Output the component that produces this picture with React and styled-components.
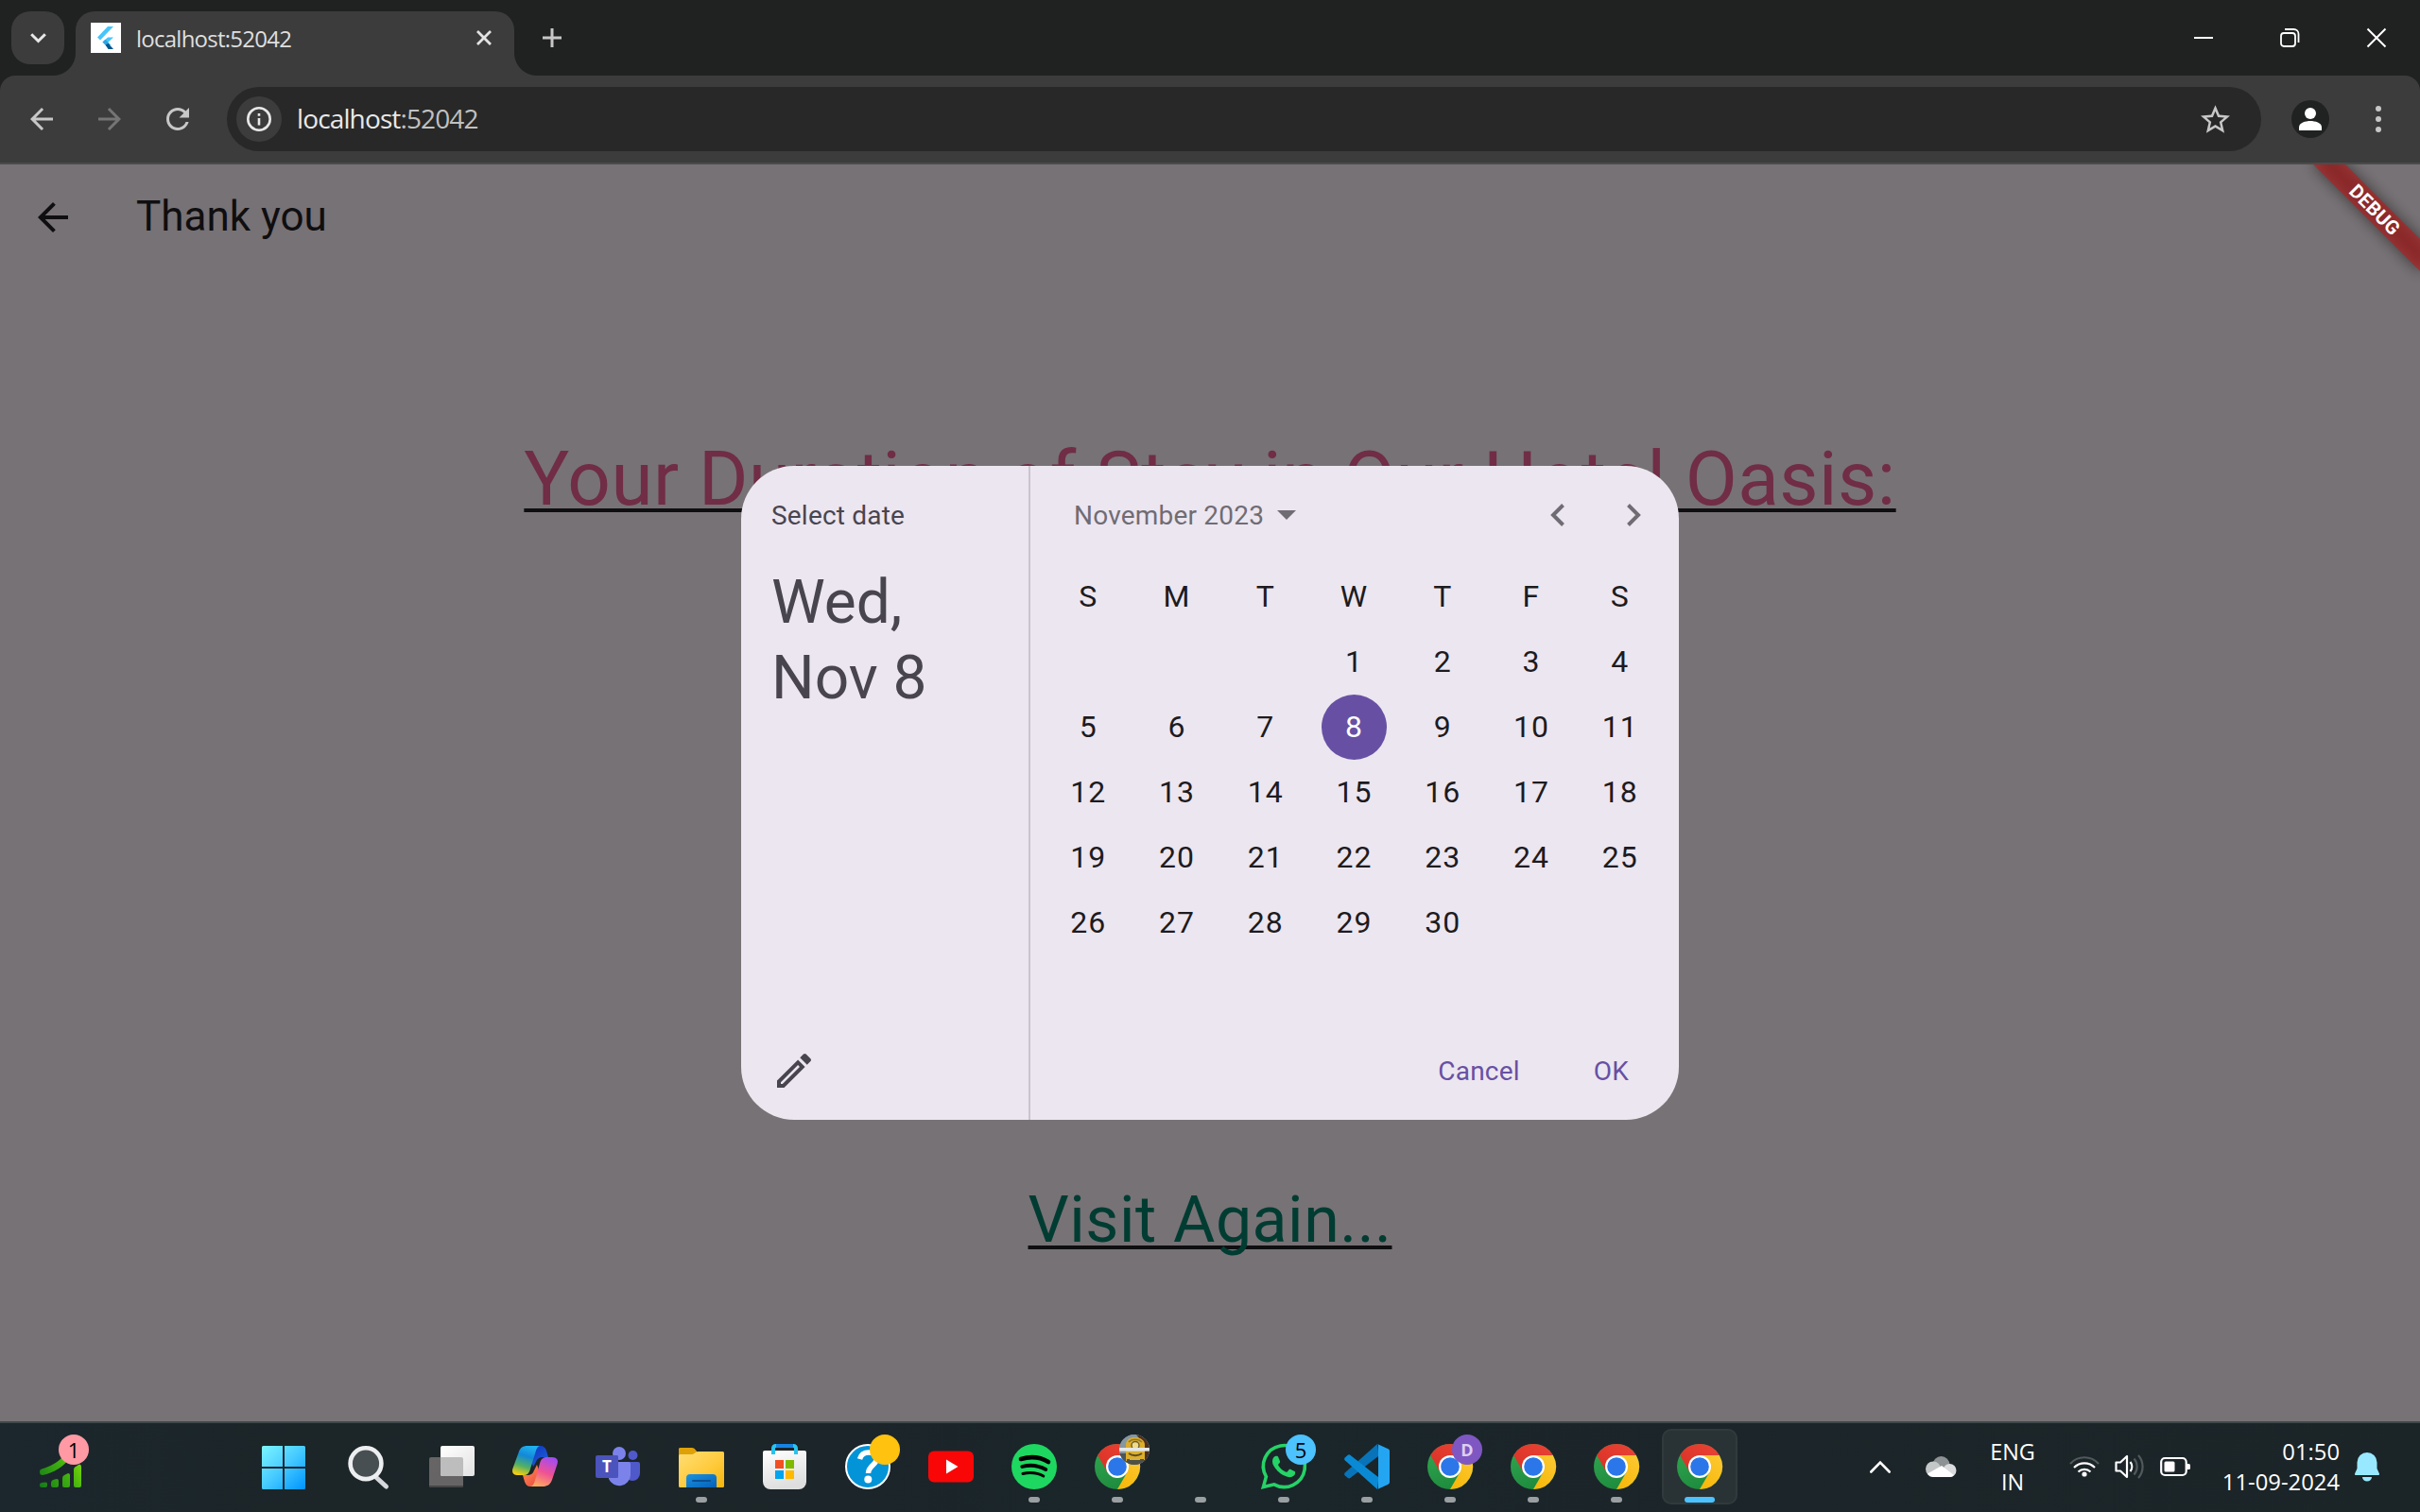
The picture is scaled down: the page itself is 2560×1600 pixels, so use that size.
import React from "react";
import styled, { createGlobalStyle, css } from "styled-components";

const ui = `"Open Sans", "Noto Sans", sans-serif`;
const roboto = `Roboto, "Noto Sans", sans-serif`;

const GlobalStyle = createGlobalStyle`
  *, *::before, *::after { box-sizing: border-box; }
  body { margin: 0; background: #202221; overflow: hidden; }
  svg { display: block; flex: none; overflow: visible; }
`;

const Screen = styled.div`
  width: 2560px;
  height: 1600px;
  display: flex;
  flex-direction: column;
  overflow: hidden;
`;

/* ---------- browser chrome ---------- */

const TabStrip = styled.header`
  height: 80px;
  display: flex;
  background: #202221;
  padding-left: 12px;
`;

const TabSearch = styled.div`
  width: 56px;
  height: 56px;
  margin: 12px 12px 0 0;
  border-radius: 20px;
  background: #3c3c3c;
  display: grid;
  place-items: center;
`;

const Tab = styled.div`
  position: relative;
  width: 464px;
  height: 68px;
  margin-top: 12px;
  padding: 0 24px 12px 16px;
  border-radius: 20px 20px 0 0;
  background: #3c3c3c;
  display: flex;
  align-items: center;

  &::before,
  &::after {
    content: "";
    position: absolute;
    bottom: 0;
    width: 24px;
    height: 24px;
  }
  &::before {
    right: 100%;
    background: radial-gradient(circle at 0 0, transparent 23.5px, #3c3c3c 24.5px);
  }
  &::after {
    left: 100%;
    background: radial-gradient(circle at 100% 0, transparent 23.5px, #3c3c3c 24.5px);
  }
`;

const TabTitle = styled.span`
  flex: 1;
  margin-left: 16px;
  padding-top: 2px;
  font: 400 24px/34px ${ui};
  letter-spacing: -0.75px;
  color: #dfdfdf;
`;

const NewTab = styled.div`
  width: 80px;
  height: 80px;
  display: grid;
  place-items: center;
`;

const WindowControls = styled.div`
  margin-left: auto;
  display: flex;
  align-items: center;
  gap: 71px;
  padding-right: 36px;
`;

const ToolbarBack = styled.div`
  background: #202221;
`;

const Toolbar = styled.div`
  height: 94px;
  background: #3c3c3c;
  border-bottom: 2px solid #4a4b4b;
  border-radius: 16px 16px 0 0;
  display: flex;
  align-items: center;
  padding: 0 40px 0 32px;
`;

const NavButtons = styled.nav`
  display: flex;
  gap: 48px;
  width: 208px;
`;

const Omnibox = styled.div`
  width: 2152px;
  height: 68px;
  border-radius: 34px;
  background: #282828;
  display: flex;
  align-items: center;
  padding: 0 33px 0 10px;
`;

const SiteInfo = styled.div`
  width: 48px;
  height: 48px;
  border-radius: 50%;
  background: #3c3c3c;
  display: grid;
  place-items: center;
`;

const Url = styled.span`
  flex: 1;
  margin-left: 16px;
  padding-bottom: 2px;
  font: 400 28px/40px ${ui};
  letter-spacing: -0.87px;
  color: #e8e8e8;
`;

const Port = styled.span`
  color: #c0c1c1;
`;

const Profile = styled.div`
  width: 40px;
  height: 40px;
  margin-left: 32px;
  border-radius: 50%;
  background: #202221;
  display: grid;
  place-items: center;
`;

const Menu = styled.div`
  margin-left: auto;
`;

/* ---------- page ---------- */

const Page = styled.main`
  position: relative;
  height: 1330px;
  background: #777275;
  overflow: hidden;
  font-family: ${roboto};
`;

const AppBar = styled.div`
  height: 112px;
  display: flex;
  align-items: center;
  padding-left: 32px;
`;

const AppTitle = styled.h1`
  margin: 0 0 2px 64px;
  font-size: 44px;
  line-height: 56px;
  font-weight: 400;
  color: #0f0e10;
`;

const Body = styled.div`
  display: flex;
  flex-direction: column;
  align-items: center;
`;

const Underlined = styled.p`
  margin: ${(p) => p.$top}px 0 0;
  font-size: ${(p) => p.$size}px;
  line-height: ${(p) => p.$line}px;
  letter-spacing: 0.5px;
  white-space: nowrap;
  color: ${(p) => p.$color};
  text-decoration: underline;
  text-decoration-color: #0f0e10;
  text-decoration-thickness: ${(p) => p.$thick}px;
  text-underline-offset: ${(p) => p.$offset}px;
  text-decoration-skip-ink: none;
`;

const DebugBanner = styled.div`
  position: absolute;
  left: 2432px;
  top: 36px;
  width: 160px;
  height: 24px;
  transform: rotate(45deg);

  &::before {
    content: "";
    position: absolute;
    inset: 0;
    background: rgba(0, 0, 0, 0.5);
    filter: blur(8px);
  }
`;

const DebugLabel = styled.span`
  position: absolute;
  inset: 0;
  background: rgba(183, 28, 28, 0.627);
  color: #fff;
  font-size: 20.4px;
  font-weight: 700;
  letter-spacing: 0.2px;
  line-height: 24px;
  text-align: center;
`;

/* ---------- date picker ---------- */

const Dialog = styled.section`
  position: absolute;
  left: 784px;
  top: 319px;
  width: 992px;
  height: 692px;
  border-radius: 56px;
  background: #ece6f0;
  overflow: hidden;
  display: flex;
`;

const Side = styled.div`
  width: 304px;
  padding: 33px 32px 28px;
  display: flex;
  flex-direction: column;
  color: #49454f;
`;

const SideLabel = styled.div`
  font-size: 28px;
  line-height: 40px;
  letter-spacing: 0.2px;
`;

const SideDate = styled.div`
  margin-top: 32px;
  font-size: 64px;
  line-height: 80px;
  white-space: pre-line;
`;

const EditButton = styled.div`
  margin-top: auto;
`;

const Main = styled.div`
  flex: 1;
  box-shadow: inset 2px 0 0 #cac4d0;
  display: flex;
  flex-direction: column;
  padding: 0 16px;
`;

const MonthBar = styled.div`
  height: 104px;
  display: flex;
  align-items: center;
  padding: 0 24px 0 32px;
  color: #706c74;
  font-size: 28px;
  letter-spacing: 0.2px;
`;

const Caret = styled.span`
  margin-left: 14px;
  border: 10px solid transparent;
  border-top-color: #706c74;
  border-bottom: 0;
`;

const MonthNav = styled.div`
  margin-left: auto;
  display: flex;
  gap: 66px;
`;

const Grid = styled.div`
  display: grid;
  grid-template-columns: repeat(7, 1fr);
  grid-auto-rows: 69px;
  place-items: center;
  margin: 0 -0.5px 0 0.5px;
  color: #1d1b20;
  font-size: 32px;
  letter-spacing: 1px;
`;

const Day = styled.span`
  width: 69px;
  height: 69px;
  border-radius: 50%;
  line-height: 69px;
  text-align: center;
  ${(p) =>
    p.$selected &&
    css`
      background: #6750a4;
      color: #fff;
    `}
`;

const Actions = styled.div`
  margin-top: auto;
  height: 104px;
  display: flex;
  align-items: center;
  justify-content: flex-end;
  gap: 78px;
  padding-right: 37px;
  color: #6750a4;
  font-size: 28px;
  letter-spacing: 0.2px;
`;

/* ---------- taskbar ---------- */

const Taskbar = styled.footer`
  height: 96px;
  border-top: 2px solid #3f484b;
  background: linear-gradient(90deg, #1b272d 0, #1c2528 340px, #1c2529 900px, #1a262a 1200px, #1c2529 1900px, #1b2427 100%);
  display: flex;
  align-items: center;
  padding-bottom: 2px;
  font-family: ${ui};
`;

const Widgets = styled.div`
  width: 262px;
  padding-left: 42px;
`;

const IconWrap = styled.div`
  position: relative;
  width: 48px;
  height: 48px;
`;

const Badge = styled.span`
  position: absolute;
  left: ${(p) => p.$left || 26}px;
  top: -10px;
  width: 32px;
  height: 32px;
  border-radius: 50%;
  background: ${(p) => p.$bg};
  color: ${(p) => p.$fg || "#000"};
  font-size: ${(p) => p.$size || 22}px;
  font-weight: ${(p) => p.$weight || 400};
  line-height: 32px;
  text-align: center;
  overflow: hidden;
`;

const Apps = styled.div`
  display: flex;
  gap: 8px;
`;

const AppSlot = styled.div`
  width: 80px;
  height: 80px;
  border-radius: 10px;
  padding-top: 16px;
  display: flex;
  flex-direction: column;
  align-items: center;
  ${(p) =>
    p.$state === "active" &&
    css`
      background: #293235;
      box-shadow: inset 0 0 0 2px #30393c;
    `}

  &::after {
    content: "";
    display: ${(p) => (p.$state ? "block" : "none")};
    margin-top: 8px;
    width: ${(p) => (p.$state === "active" ? 32 : 12)}px;
    height: 6px;
    border-radius: 3px;
    background: ${(p) => (p.$state === "active" ? "#4cc2ff" : "#9a9fa2")};
  }
`;

const Tray = styled.div`
  margin-left: auto;
  padding-right: 43px;
  display: flex;
  align-items: center;
  color: #fff;
  font-size: 23.4px;
  line-height: 32px;
`;

const Language = styled.div`
  width: 84px;
  margin: 0 18px 0 17px;
  text-align: center;
`;

const StatusIcons = styled.div`
  display: flex;
  gap: 16px;
`;

const Clock = styled.div`
  width: 157px;
  margin-right: 16px;
  font-size: 23.8px;
  text-align: right;
`;

/* ---------- drawings ---------- */

const Chrome = () => (
  <svg width="48" height="48" viewBox="0 0 48 48">
    <defs>
      <linearGradient id="cg" x1="0" y1="0" x2="0.4" y2="1">
        <stop offset="0" stopColor="#33a852" />
        <stop offset="1" stopColor="#1e8c3e" />
      </linearGradient>
      <linearGradient id="cy" x1="1" y1="0" x2="0.4" y2="1">
        <stop offset="0" stopColor="#fcc934" />
        <stop offset="1" stopColor="#f8b90c" />
      </linearGradient>
      <linearGradient id="cr" x1="0" y1="1" x2="1" y2="0">
        <stop offset="0" stopColor="#d93025" />
        <stop offset="1" stopColor="#ea4335" />
      </linearGradient>
    </defs>
    <circle cx="24" cy="24" r="24" fill="url(#cg)" />
    <path d="M44.8 12A24 24 0 0 1 24 48L34.4 30 24 12Z" fill="url(#cy)" />
    <path d="M3.2 12A24 24 0 0 1 44.8 12H24L13.6 30Z" fill="url(#cr)" />
    <circle cx="24" cy="24" r="12" fill="#fff" />
    <circle cx="24" cy="24" r="9.8" fill="#2b77ea" />
  </svg>
);

const StartLogo = () => (
  <svg width="48" height="48" viewBox="2 0 48 48">
    <defs>
      <linearGradient id="win" gradientUnits="userSpaceOnUse" x1="0" y1="2" x2="45" y2="48">
        <stop offset="0" stopColor="#7df6ff" />
        <stop offset="0.5" stopColor="#48ccff" />
        <stop offset="1" stopColor="#0296ff" />
      </linearGradient>
    </defs>
    <path
      fill="url(#win)"
      d="M2.500 2H23V24H1V3.500A1.500 1.500 0 0 1 2.500 2ZM25 2H45.500A1.500 1.500 0 0 1 47 3.500V24H25ZM1 26H23V48H2.500A1.500 1.500 0 0 1 1 46.500ZM25 26H47V46.500A1.500 1.500 0 0 1 45.500 48H25Z"
    />
  </svg>
);

const SearchLogo = () => (
  <svg width="48" height="48" viewBox="0 0 48 48">
    <path d="M31 34.500 42.500 45" stroke="#d5d8dc" strokeWidth="5" strokeLinecap="round" />
    <circle cx="21" cy="20.700" r="16.400" fill="#474f52" stroke="#eceef0" strokeWidth="4.600" />
  </svg>
);

const TaskView = () => (
  <svg width="48" height="48" viewBox="0 0 48 48">
    <defs>
      <linearGradient id="tv" x1="0" y1="0" x2="1" y2="1">
        <stop offset="0" stopColor="#fff" />
        <stop offset="1" stopColor="#e2e2e2" />
      </linearGradient>
    </defs>
    <rect x="0" y="14" width="36" height="32" rx="2" fill="#666464" />
    <path d="M0 44H36A2 2 0 0 1 34 46H2A2 2 0 0 1 0 44Z" fill="#464646" />
    <rect x="12" y="2" width="36" height="32" rx="2" fill="url(#tv)" />
    <path d="M12 14H34A2 2 0 0 1 36 16V34H14A2 2 0 0 1 12 32Z" fill="#bdbdbd" />
  </svg>
);

const Copilot = () => (
  <svg width="48" height="48" viewBox="0 0 48 48">
    <defs>
      <linearGradient id="cpa" x1="0.6" y1="0" x2="0.3" y2="1">
        <stop offset="0" stopColor="#1fb2ef" />
        <stop offset="0.35" stopColor="#1388d8" />
        <stop offset="0.7" stopColor="#52b064" />
        <stop offset="1" stopColor="#f5cf10" />
      </linearGradient>
      <linearGradient id="cpb" x1="0.7" y1="0" x2="0.3" y2="1">
        <stop offset="0" stopColor="#a34cf2" />
        <stop offset="0.5" stopColor="#ee5195" />
        <stop offset="1" stopColor="#ffab5e" />
      </linearGradient>
      <linearGradient id="cpc" x1="0" y1="0" x2="1" y2="1">
        <stop offset="0" stopColor="#0a2fb8" />
        <stop offset="1" stopColor="#2263dd" />
      </linearGradient>
      <linearGradient id="cpd" x1="0" y1="0" x2="1" y2="1">
        <stop offset="0" stopColor="#ff9550" />
        <stop offset="1" stopColor="#e83d3f" />
      </linearGradient>
    </defs>
    <path d="M14 2H29C33 2 35 4 36 7L38 14H33C28 14 26 16 25 19L22 24Z" fill="url(#cpc)" />
    <path d="M34 45H19C16 45 14 43 13 40L11 33H15C20 33 22 31 23 28L26 22Z" fill="url(#cpd)" />
    <path d="M16 2H30C27 2 26 4 25 7L18.500 28C17.500 31 15.500 33 12 33H5C1 33-.8 30 .4 26L7 8C8.500 4 11 2 16 2Z" fill="url(#cpa)" />
    <path d="M37 14H42C47 14 48.800 17 47.600 21L42 38C40 43 37 45 32 45H18C21 45 22.500 43 23.500 40L29.500 19C30.500 16 32.500 14 37 14Z" fill="url(#cpb)" />
  </svg>
);

const Teams = () => (
  <svg width="48" height="48" viewBox="0 0 48 48">
    <circle cx="39.500" cy="12" r="5" fill="#5059c9" />
    <path d="M32 19H45A2 2 0 0 1 47 21V31A8 8 0 0 1 39 39C35 39 32 36 32 31Z" fill="#5059c9" />
    <circle cx="25" cy="10" r="7" fill="#7b83eb" />
    <path d="M14 19H35A2 2 0 0 1 37 21V33A12 12 0 0 1 14 37Z" fill="#7b83eb" />
    <path d="M18 12H24V36H16V19Z" fill="#000" opacity=".12" />
    <rect x="0" y="12" width="24" height="24" rx="2" fill="#4b53bc" />
    <text x="12" y="30" fill="#fff" fontFamily="Open Sans, sans-serif" fontSize="17" fontWeight="700" textAnchor="middle">
      T
    </text>
  </svg>
);

const Folder = () => (
  <svg width="48" height="48" viewBox="0 0 48 48">
    <defs>
      <linearGradient id="fo" x1="0" y1="0" x2="1" y2="1">
        <stop offset="0" stopColor="#ffde75" />
        <stop offset="0.55" stopColor="#ffcb3e" />
        <stop offset="1" stopColor="#f6b50c" />
      </linearGradient>
      <linearGradient id="fb" x1="0" y1="0" x2="1" y2="1">
        <stop offset="0" stopColor="#1a93e0" />
        <stop offset="1" stopColor="#0660b8" />
      </linearGradient>
    </defs>
    <path d="M0 5A1.500 1.500 0 0 1 1.500 4H14C17 4 18 7 20 8.500H30V20H0Z" fill="#dfa108" />
    <path d="M0 12.500A1.500 1.500 0 0 1 1.500 11H14C17 11 17 8 21 8H46.500A1.500 1.500 0 0 1 48 9.500V44.500A1.500 1.500 0 0 1 46.500 46H1.500A1.500 1.500 0 0 1 0 44.500Z" fill="url(#fo)" />
    <path d="M8 46V36A4 4 0 0 1 12 32H36A4 4 0 0 1 40 36V46Z" fill="url(#fb)" />
    <path d="M15 39H33" stroke="#0b4f92" strokeWidth="2" strokeLinecap="round" />
  </svg>
);

const Store = () => (
  <svg width="48" height="48" viewBox="0 0 48 48">
    <defs>
      <linearGradient id="st" x1="0" y1="0" x2="0.3" y2="1">
        <stop offset="0" stopColor="#fff" />
        <stop offset="1" stopColor="#dedede" />
      </linearGradient>
    </defs>
    <path d="M1 9A2 2 0 0 1 3 7H45A2 2 0 0 1 47 9V40A8 8 0 0 1 39 48H9A8 8 0 0 1 1 40Z" fill="url(#st)" />
    <path d="M12 11V4.500A2.500 2.500 0 0 1 14.500 2H33.500A2.500 2.500 0 0 1 36 4.500V11" fill="none" stroke="#27c4ee" strokeWidth="4" />
    <path d="M15 2H33" stroke="#1683e4" strokeWidth="4" />
    <rect x="14" y="17" width="9" height="9" fill="#f25022" />
    <rect x="25" y="17" width="9" height="9" fill="#7fba00" />
    <rect x="14" y="28" width="9" height="9" fill="#00a4ef" />
    <rect x="25" y="28" width="9" height="9" fill="#ffb900" />
  </svg>
);

const Help = () => (
  <svg width="48" height="48" viewBox="0 0 48 48">
    <circle cx="24" cy="24" r="23" fill="#0394d8" stroke="#fff" strokeWidth="2" />
    <path d="M15.500 16C17 10.500 21 9 25 9C30 9 33 12 33 16.500C33 22 24.500 23.500 24.500 31" fill="none" stroke="#fff" strokeWidth="5.500" />
    <circle cx="24.300" cy="37.500" r="4" fill="#fff" />
  </svg>
);

const YouTube = () => (
  <svg width="48" height="48" viewBox="0 0 48 48">
    <rect x="0" y="7.500" width="48" height="33" rx="6" fill="#f90707" />
    <path d="M19 16.500 31.500 24 19 31.500Z" fill="#fff" />
  </svg>
);

const Spotify = () => (
  <svg width="48" height="48" viewBox="0 0 48 48">
    <circle cx="24" cy="24" r="24" fill="#1ed760" />
    <g fill="none" stroke="#000" strokeLinecap="round">
      <path d="M10 16C20 13 31 14.200 39 19" strokeWidth="4.600" />
      <path d="M11.300 24C20 21.500 29 23 36.300 27" strokeWidth="3.900" />
      <path d="M12 31.500C20 29.800 27.500 30.600 33.800 34" strokeWidth="3" />
    </g>
  </svg>
);

const WhatsApp = () => (
  <svg width="48" height="48" viewBox="0 0 24 24" fill="#25d366">
    <path d="M17.472 14.382c-.297-.149-1.758-.867-2.030-.967-.273-.099-.471-.148-.67.15-.197.297-.767.966-.94 1.164-.173.199-.347.223-.644.075-.297-.15-1.255-.463-2.390-1.475-.883-.788-1.480-1.761-1.653-2.059-.173-.297-.018-.458.130-.606.134-.133.298-.347.446-.520.149-.174.198-.298.298-.497.099-.198.050-.371-.025-.520-.075-.149-.669-1.612-.916-2.207-.242-.579-.487-.500-.669-.510-.173-.008-.371-.010-.570-.010-.198 0-.520.074-.792.372-.272.297-1.040 1.016-1.040 2.479 0 1.462 1.065 2.875 1.213 3.074.149.198 2.096 3.200 5.077 4.487.709.306 1.262.489 1.694.625.712.227 1.360.195 1.871.118.571-.085 1.758-.719 2.006-1.413.248-.694.248-1.289.173-1.413-.074-.124-.272-.198-.570-.347" />
    <path fill="none" stroke="#25d366" strokeWidth="1.800" d="M1.200 22.800 2.700 17.300A11 11 0 1 1 6.900 21.400Z" />
  </svg>
);

const VSCode = () => (
  <svg width="48" height="48" viewBox="0 0 48 48">
    <path d="M35 0 36.500 12.500 6 36.200A2 2 0 0 1 3.800 36L.7 33.300A2 2 0 0 1 .7 30.500Z" fill="#0873b8" />
    <path d="M35 48 36.500 35.500 6 11.500A2 2 0 0 0 3.800 11.700L.7 14.500A2 2 0 0 0 .7 17.300Z" fill="#0a8ad4" />
    <path d="M35 0 46.500 5.300A2.500 2.500 0 0 1 48 7.500V40.500A2.500 2.500 0 0 1 46.500 42.700L35 48A2 2 0 0 0 36 46V2A2 2 0 0 0 35 0Z" fill="#24a5f2" />
  </svg>
);

const Minion = () => (
  <svg width="32" height="32" viewBox="0 0 32 32">
    <rect width="32" height="32" fill="#8797a0" />
    <path d="M18 0H32V32H26L24 8Z" fill="#4b3020" />
    <path d="M0 20H10L8 32H0Z" fill="#4c5558" />
    <path d="M7 28V11C7 6 11 3 16.500 3S27 6 27 11V27Z" fill="#dcae2c" />
    <path d="M10 8C13 4.500 20 4 24 8" stroke="#8f7830" strokeWidth="1.600" fill="none" />
    <circle cx="17" cy="11.500" r="4" fill="#f0dc86" stroke="#6b5b30" strokeWidth="1.400" />
    <rect y="14" width="32" height="3.600" fill="#e4e8e8" />
    <path d="M10 20C14 23 20 23 24 20" stroke="#5b4d24" strokeWidth="1.800" fill="none" />
    <path d="M8 26H26V32H8Z" fill="#4e5048" />
    <path d="M11 26H22" stroke="#d8b03a" strokeWidth="2" />
  </svg>
);

const Chart = () => (
  <svg width="48" height="48" viewBox="0 0 48 48">
    <defs>
      <linearGradient id="gr" gradientUnits="userSpaceOnUse" x1="0" y1="46" x2="44" y2="20">
        <stop offset="0" stopColor="#137a17" />
        <stop offset="0.6" stopColor="#3fae10" />
        <stop offset="1" stopColor="#7bd60b" />
      </linearGradient>
    </defs>
    <g fill="url(#gr)">
      <path d="M0 43Q0 41.500 2 41L6 40.500Q8 40.500 8 42V44A2 2 0 0 1 6 46H2A2 2 0 0 1 0 44Z" />
      <path d="M12 41Q12 39 14 38L18 37Q20 37 20 39V44A2 2 0 0 1 18 46H14A2 2 0 0 1 12 44Z" />
      <path d="M24 36Q24 34 26 33L30 31Q32 31 32 33V44A2 2 0 0 1 30 46H26A2 2 0 0 1 24 44Z" />
      <path d="M36 27Q36 25 38 24L42 21.500Q44 21.500 44 24V44A2 2 0 0 1 42 46H38A2 2 0 0 1 36 44Z" />
      <path d="M0 29Q0 27 2 26.500C11 24 18 20 24 14H32C26 24 14 31 3 33Q0 33 0 30Z" />
    </g>
  </svg>
);

const FlutterMark = () => (
  <svg width="32" height="32" viewBox="0 0 32 32">
    <rect width="32" height="32" fill="#fff" />
    <path d="M18 4H24L10 18.500 7 15.500Z" fill="#47c5fb" />
    <path d="M18 15.500H24L15.500 23.500 12.500 20.500Z" fill="#47c5fb" />
    <path d="M12.500 20.500 15.500 17.800 21 23.500 18 26Z" fill="#28a5e8" />
    <path d="M15.500 23.500 18.500 22 24 28H18.500Z" fill="#00568e" />
  </svg>
);

const MatArrow = ({ size, color, flip }) => (
  <svg width={size} height={size} viewBox="4 4 16 16" fill={color} transform={flip ? "scale(-1 1)" : undefined}>
    <path d="M20 11H7.830l5.590-5.590L12 4l-8 8 8 8 1.410-1.410L7.830 13H20v-2z" />
  </svg>
);

const Chevron = ({ flip }) => (
  <svg width="15" height="24" viewBox="0 0 15 24" fill="none" stroke="#706c74" strokeWidth="4">
    <path d={flip ? "M1.500 1.500 12 12 1.500 22.500" : "M13.500 1.500 3 12 13.500 22.500"} />
  </svg>
);

const week = ["S", "M", "T", "W", "T", "F", "S"];
const cells = [null, null, null, ...Array.from({ length: 30 }, (_, i) => i + 1)];

const apps = [
  { icon: <StartLogo /> },
  { icon: <SearchLogo /> },
  { icon: <TaskView /> },
  { icon: <Copilot /> },
  { icon: <Teams /> },
  { icon: <Folder />, state: "open" },
  { icon: <Store /> },
  { icon: <Help />, badge: <Badge $bg="#ffc20e" /> },
  { icon: <YouTube /> },
  { icon: <Spotify />, state: "open" },
  { icon: <Chrome />, state: "open", badge: <Badge $bg="#70818b"><Minion /></Badge> },
  { icon: null, state: "open" },
  { icon: <WhatsApp />, state: "open", badge: <Badge $bg="#4cc2ff">5</Badge> },
  { icon: <VSCode />, state: "open" },
  {
    icon: <Chrome />,
    state: "open",
    badge: <Badge $bg="#7e57c2" $fg="#dccff0" $size={18} $weight={700}>D</Badge>,
  },
  { icon: <Chrome />, state: "open" },
  { icon: <Chrome />, state: "open" },
  { icon: <Chrome />, state: "active" },
];

export default function App() {
  return (
    <Screen>
      <GlobalStyle />
      <TabStrip>
        <TabSearch>
          <svg width="17" height="11" viewBox="0 0 17 11" fill="none" stroke="#e8e8e8" strokeWidth="3">
            <path d="M1.200 1.200 8.500 8.500 15.800 1.200" />
          </svg>
        </TabSearch>
        <Tab>
          <FlutterMark />
          <TabTitle>localhost:52042</TabTitle>
          <svg width="16" height="16" viewBox="0 0 16 16" stroke="#e3e3e3" strokeWidth="2.800">
            <path d="M1 1 15 15M15 1 1 15" />
          </svg>
        </Tab>
        <NewTab>
          <svg width="20" height="20" viewBox="0 0 20 20" stroke="#c7c7c7" strokeWidth="3">
            <path d="M10 0V20M0 10H20" />
          </svg>
        </NewTab>
        <WindowControls>
          <svg width="20" height="20" viewBox="0 0 20 20" stroke="#fff" strokeWidth="2">
            <path d="M0 10H20" />
          </svg>
          <svg width="21" height="20" viewBox="0 0 21 20" fill="none" stroke="#fff" strokeWidth="1.800">
            <rect x="1" y="5" width="15" height="14" rx="3" />
            <path d="M5 1H14.500A5 5 0 0 1 19.500 6V15" />
          </svg>
          <svg width="20" height="20" viewBox="0 0 20 20" stroke="#fff" strokeWidth="2">
            <path d="M.5 .5 19.500 19.500M19.500 .5 .5 19.500" />
          </svg>
        </WindowControls>
      </TabStrip>
      <ToolbarBack>
        <Toolbar>
          <NavButtons>
            <MatArrow size={24} color="#c7c7c7" />
            <MatArrow size={24} color="#757575" flip />
            <svg width="24" height="24" viewBox="4 4 16 16" fill="#c7c7c7">
              <path d="M17.650 6.350C16.200 4.900 14.210 4 12 4c-4.420 0-7.990 3.580-7.990 8s3.570 8 7.990 8c3.730 0 6.840-2.550 7.730-6h-2.080c-.82 2.330-3.040 4-5.650 4-3.310 0-6-2.690-6-6s2.690-6 6-6c1.660 0 3.140.69 4.220 1.780L13 11h7V4l-2.350 2.350z" />
            </svg>
          </NavButtons>
          <Omnibox>
            <SiteInfo>
              <svg width="26" height="26" viewBox="0 0 26 26" fill="none" stroke="#e8e8e8" strokeWidth="2.600">
                <circle cx="13" cy="13" r="11.700" />
                <path d="M13 12V19.500M13 7V9.800" />
              </svg>
            </SiteInfo>
            <Url>
              localhost<Port>:52042</Port>
            </Url>
            <svg width="31" height="30" viewBox="2 2 20 19" fill="#c7c7c7">
              <path d="M22 9.240l-7.190-.62L12 2 9.190 8.630 2 9.240l5.460 4.730L5.820 21 12 17.270 18.180 21l-1.630-7.030L22 9.240zM12 15.400l-3.760 2.270 1-4.280-3.320-2.880 4.380-.38L12 6.100l1.710 4.040 4.380.38-3.320 2.880 1 4.280L12 15.400z" />
            </svg>
          </Omnibox>
          <Profile>
            <svg width="24" height="24" viewBox="0 0 24 24" fill="#fff">
              <circle cx="12" cy="6" r="6" />
              <path d="M0 24V20.500C0 16 7 14 12 14S24 16 24 20.500V24Z" />
            </svg>
          </Profile>
          <Menu>
            <svg width="8" height="28" viewBox="0 0 8 28" fill="#c7c7c7">
              <circle cx="4" cy="3" r="3" />
              <circle cx="4" cy="14" r="3" />
              <circle cx="4" cy="25" r="3" />
            </svg>
          </Menu>
        </Toolbar>
      </ToolbarBack>

      <Page>
        <AppBar>
          <svg width="48" height="48" viewBox="0 0 24 24" fill="#0f0e10">
            <path d="M20 11H7.830l5.590-5.590L12 4l-8 8 8 8 1.410-1.410L7.830 13H20v-2z" />
          </svg>
          <AppTitle>Thank you</AppTitle>
        </AppBar>
        <Body>
          <Underlined $top={174} $size={80} $line={94} $color="#702d45" $thick={4} $offset={4}>
            Your Duration of Stay in Our Hotel Oasis:
          </Underlined>
          <Underlined $top={696} $size={68} $line={82} $color="#003c32" $thick={3.5} $offset={4}>
            Visit Again...
          </Underlined>
        </Body>

        <Dialog>
          <Side>
            <SideLabel>Select date</SideLabel>
            <SideDate>{"Wed,\nNov 8"}</SideDate>
            <EditButton>
              <svg width="48" height="48" viewBox="0 0 24 24" fill="#49454f">
                <path d="M14.060 9.020l.92.92L5.920 19H5v-.92l9.060-9.060M17.660 3c-.25 0-.51.1-.7.290l-1.830 1.830 3.750 3.750 1.830-1.830c.39-.39.39-1.020 0-1.410l-2.340-2.340c-.2-.2-.45-.290-.71-.290zm-3.600 3.190L3 17.250V21h3.750L17.810 9.940l-3.750-3.750z" />
              </svg>
            </EditButton>
          </Side>
          <Main>
            <MonthBar>
              November 2023
              <Caret />
              <MonthNav>
                <Chevron />
                <Chevron flip />
              </MonthNav>
            </MonthBar>
            <Grid>
              {week.map((d, i) => (
                <Day key={"w" + i}>{d}</Day>
              ))}
              {cells.map((d, i) => (
                <Day key={i} $selected={d === 8}>
                  {d}
                </Day>
              ))}
            </Grid>
            <Actions>
              <span>Cancel</span>
              <span>OK</span>
            </Actions>
          </Main>
        </Dialog>

        <DebugBanner>
          <DebugLabel>DEBUG</DebugLabel>
        </DebugBanner>
      </Page>

      <Taskbar>
        <Widgets>
          <IconWrap>
            <Chart />
            <Badge $bg="#ff99a4" $left={20}>1</Badge>
          </IconWrap>
        </Widgets>
        <Apps>
          {apps.map((a, i) => (
            <AppSlot key={i} $state={a.state}>
              <IconWrap>
                {a.icon}
                {a.badge}
              </IconWrap>
            </AppSlot>
          ))}
        </Apps>
        <Tray>
          <svg width="22" height="13" viewBox="0 0 22 13" fill="none" stroke="#fff" strokeWidth="2.600" strokeLinecap="round">
            <path d="M1.300 11.500 11 1.500 20.700 11.500" />
          </svg>
          <svg width="33" height="22" viewBox="0 0 33 22" style={{ marginLeft: 37 }}>
            <circle cx="16.500" cy="9" r="9" fill="#8d9294" />
            <circle cx="8" cy="13.500" r="8" fill="#c4c7c8" />
            <circle cx="25.500" cy="15" r="7" fill="#d9dbdc" />
            <path d="M2 18.500 17 10 30 20Q28.500 22 26 22H8Q4 22 2 18.500Z" fill="#fff" />
          </svg>
          <Language>
            ENG
            <br />
            IN
          </Language>
          <StatusIcons>
            <svg width="32" height="26" viewBox="0 0 32 26" fill="none" stroke="#fff" strokeWidth="2.200">
              <path d="M1 10A20 20 0 0 1 31 10" stroke="#51595c" />
              <path d="M5 14A15.500 15.500 0 0 1 27 14M9.500 18.500A9.500 9.500 0 0 1 22.500 18.500" />
              <circle cx="16" cy="21" r="2.600" fill="#fff" stroke="none" />
            </svg>
            <svg width="32" height="26" viewBox="0 0 32 26" fill="none" stroke="#fff" strokeWidth="2.200" strokeLinejoin="round">
              <path d="M1.500 8.500H6L13 2V24L6 17.500H1.500Z" />
              <path d="M16.500 8A8 8 0 0 1 16.500 18" />
              <path d="M20.500 4.500A13 13 0 0 1 20.500 21.500M25 1A18 18 0 0 1 25 25" stroke="#51595c" />
            </svg>
            <svg width="33" height="26" viewBox="0 0 33 26">
              <rect x="1.200" y="4" width="26.500" height="18" rx="4" fill="none" stroke="#fff" strokeWidth="2.200" />
              <rect x="4.500" y="7.500" width="11" height="11" rx="1.500" fill="#fff" />
              <path d="M28 10H30.500A1.500 1.500 0 0 1 32 11.500V14.500A1.500 1.500 0 0 1 30.500 16H28Z" fill="#fff" />
            </svg>
          </StatusIcons>
          <Clock>
            01:50
            <br />
            11-09-2024
          </Clock>
          <svg width="26" height="30" viewBox="0 0 26 30" fill="#98e9ff">
            <path d="M13 0A10.500 10.500 0 0 1 23.500 10.500V17L26 22.500Q26.300 24 25 24H1Q-.3 24 0 22.500L2.500 17V10.500A10.500 10.500 0 0 1 13 0ZM8 26H18A5 4.500 0 0 1 8 26Z" />
          </svg>
        </Tray>
      </Taskbar>
    </Screen>
  );
}
